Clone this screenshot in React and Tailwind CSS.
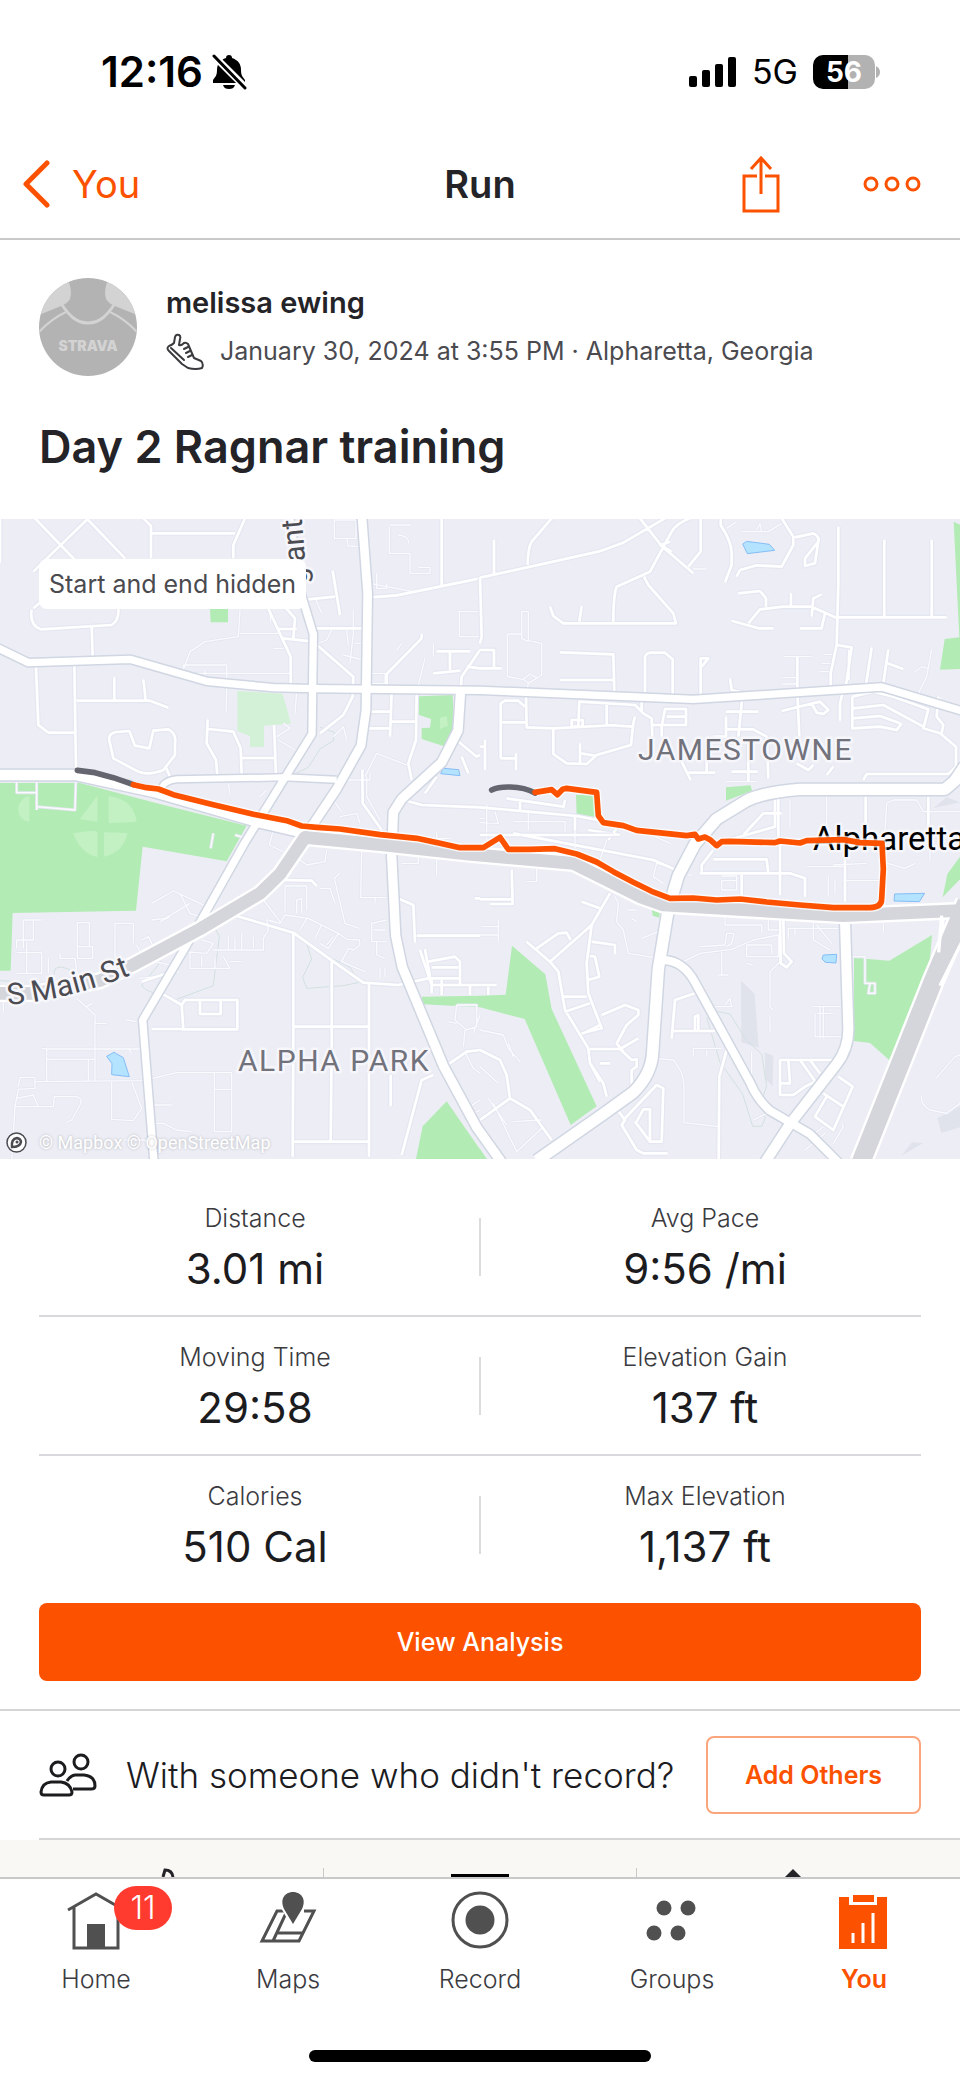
import clsx from "clsx";

const stats = [
  [
    { label: "Distance", value: "3.01 mi" },
    { label: "Avg Pace", value: "9:56 /mi" },
  ],
  [
    { label: "Moving Time", value: "29:58" },
    { label: "Elevation Gain", value: "137 ft" },
  ],
  [
    { label: "Calories", value: "510 Cal" },
    { label: "Max Elevation", value: "1,137 ft" },
  ],
];

// Map geometry is stored at 3x and scaled down when drawn.
const arterials = [
  { w: 22, d: "M-10 385L85 431L390 421L620 487L820 506L940 509L1440 514L2080 541L2645 504L2890 577" },
  { w: 22, d: "M868 -10L905 230L940 345L936 645L840 800L735 970L600 1210L428 1503L462 1930" },
  { w: 26, d: "M1086 -5L1103 223L1098 573L1083 680L1010 810L930 930" },
  { w: 28, d: "M1382 513L1374 635L1325 730L1205 840L1180 880L1175 1010L1187 1250L1207 1345L1330 1640L1430 1825L1505 1930" },
  { w: 32, d: "M-10 768L230 768L460 818L780 910L930 945" },
  { w: 18, d: "M485 805Q495 785 530 781L850 775L1010 782" },
  { w: 34, d: "M2895 740L2865 785L2835 811L2400 811Q2290 820 2240 845L2150 900L2085 975L2035 1070L2005 1170L1975 1350L1958 1600Q1955 1665 1900 1720L1810 1785L1610 1925" },
  { w: 24, d: "M1990 1323Q2050 1325 2085 1390L2250 1690Q2270 1740 2310 1775L2430 1845L2515 1930" },
  { w: 30, d: "M2535 1205L2545 1530Q2545 1590 2510 1635L2370 1815L2295 1930" },
];

const highways = [
  { w: 38, d: "M-10 1423L110 1423L300 1385L400 1337L600 1230L780 1123L840 1065L915 955L1150 978L1400 1005L1720 1033L1920 1133L1990 1158L2530 1190L2890 1174" },
  { w: 56, d: "M2900 1150L2800 1385L2583 1930" },
];

const parks = [
  "M0 792H240L480 855L740 920L680 1027L428 983L408 1175L38 1182L32 1355H0Z",
  "M1257 532L1358 528L1362 620L1332 682L1265 660V627L1290 626L1293 600L1257 588Z",
  "M630 270H684V310H632Z",
  "M2861 8L2890 22V450L2820 452L2834 360L2878 355Z",
  "M1728 827H1785L1786 896L1730 890Z",
  "M2178 805L2252 799L2256 815L2178 845Z",
  "M1264 1433L1440 1430L1517 1427L1536 1280L1636 1366L1655 1470L1790 1762L1712 1818L1574 1500L1440 1465L1270 1456Z",
  "M1340 1747L1268 1822L1248 1920H1460Z",
  "M2562 1316L2668 1325L2796 1248L2786 1370L2672 1627L2610 1572L2562 1566Z",
  "M2890 1000L2842 1065L2828 1135L2890 1070Z",
  "M1955 1168L1980 1174L1978 1196L1958 1190Z",
  "M1440 1890L1460 1920H1440Z",
];

const palePatches = [
  "M240 900L292 830V908Z",
  "M326 832Q400 840 410 908L326 912Z",
  "M220 943Q290 930 292 940V1015Q240 1000 220 943Z",
  "M312 940L382 943Q370 1000 312 1013Z",
  "M88 830V908Q50 900 56 860Q64 836 88 830Z",
  "M1320 596L1340 592L1344 620L1320 630Z",
];

const ponds = [
  "M2228 75L2240 67L2308 76L2324 94L2242 104Z",
  "M1330 748L1376 752L1380 770L1322 764Z",
  "M2684 1125L2774 1123L2758 1148L2682 1146Z",
  "M2470 1308L2510 1306L2508 1332L2476 1330L2466 1320Z",
  "M320 1612L342 1600L370 1616L388 1673L335 1667L336 1634Z",
];

const shadows = [
  "M2223 1385L2264 1424L2276 1586L2224 1570Z",
  "M2294 1600L2320 1610L2318 1702L2296 1680Z",
  "M2812 1798L2880 1762V1825L2824 1842Z",
  "M2736 1870L2770 1872L2704 1910Z",
  "M2800 868L2840 834L2880 850Z",
];

// Side streets, one group per map tile.
const tiles = [
  {
    x: 0,
    y: -27,
    streets:
      "M105 25L225 150M260 25L375 145M265 25L100 185M430 25L453 48V145M455 70H705M735 25L700 105V145M0 25V160M95 300Q88 345 122 358L335 345Q358 330 355 295M100 295L130 270M275 350L278 440M108 470L115 645L145 668H225M223 465L228 775M230 572H450L505 593M343 502V572M430 508L437 570M330 700Q320 670 350 666L388 663L405 707L448 715L460 662L505 658Q530 670 525 700V735L490 780Q440 800 405 780L340 745ZM497 770L510 800M623 628L620 700L648 750L652 795M625 657L700 665L722 715L725 795M725 744H825M822 645L828 795M925 268L1005 260M998 182L1020 315M1110 262L1190 256L1440 205M1325 25V225M945 355H1095M850 385L940 395L1060 500L1058 560L1030 615L960 670M800 285L872 440V520M850 285L885 325L880 385M836 357H890M1265 372L1265 385L1160 492V530M1310 424H1410M1350 424V480M1300 490L1380 482M1440 420L1385 500L1382 540M1400 470L1440 475M1105 605H1175M1175 545L1170 680M1175 635H1250M1105 655H1170M1250 555L1248 690L1225 760L1235 810M1087 780L1088 880L1145 960M1210 870L1265 885L1440 892M1370 690L1430 740L1440 735M1310 800L1275 850M1385 740L1405 790",
    paths:
      "M50 815V848H108M110 815V900M110 890L225 900L228 800M1003 30H1068V85H1003ZM1040 85L1045 108L1080 110M1168 50V130H1230V190M1232 45H1170M1195 75Q1230 80 1225 100M1230 190H1290V172H1255M1375 305H1440M1378 305V380H1440M550 480L570 425L615 395L715 380L720 300M720 370H840M680 465H550V490H870M680 465V540L678 608M615 480V495M810 300L812 335M890 545L885 610M1110 220L1240 245M1130 190V235H1160V220M1060 300V370L1050 460M1040 360L1045 405M1065 400H1090V370M1030 435L1090 450M995 360L980 390L955 400M1115 490H1155V520H1110M1205 400L1190 420M1300 400V440M1275 445L1255 525M830 680L870 655L850 640M835 690L885 720M1095 800L1130 730L1220 765M1100 800V860L1140 930M985 850L1025 905M780 860L800 840M685 820L690 850M1000 680L1030 650L1040 690M820 415H850M948 270L965 310M1040 810H1110V785M1020 920L1070 910L1080 940M1310 965V985H1350",
  },
  {
    x: 1440,
    y: -27,
    streets:
      "M42 90V190M215 25L155 95Q143 115 143 165M0 203L355 125L430 98L555 25M480 25L545 108L640 190M630 25Q590 40 575 65L510 185L410 230Q400 255 400 335M662 25V125L625 170M575 125L540 105L570 95M492 200L505 225L580 310L588 340H250L220 318L210 290M305 288L298 335M722 25V45Q755 95 755 130V165L735 217M905 25L940 80V105L905 170L830 166L780 180L770 200M945 82L1000 70Q1020 80 1015 95L1005 160L975 168V145L1015 95M775 250L840 243L858 265V290M755 332L835 355H880M805 340L840 298L910 290H995L1065 322H1400M933 250V288M995 320L1000 265L1025 253M1035 310L1025 355H960M1075 50V220L1070 405L1115 412L1098 525M1213 90V320M1355 90V320M1070 405L1052 490V555M1108 420L1105 510M1175 412L1158 525M1225 418L1210 520M1222 460L1270 477M240 427L400 433L403 545M240 510H400M495 550V440Q500 428 515 428H555L578 448V555M662 555V445H685L665 470M750 505L755 540L788 548L775 680M952 440V545L958 680M0 420H42V475M0 475H65M0 203L5 380L0 400M138 555L140 652L220 655L410 645M62 745V580L75 572H115L135 590M62 637H140M62 745H108M108 730V780M220 655V732L260 760L320 762L350 735L453 705L460 640L465 620M295 648L298 575L465 585L490 610L515 625L517 680M380 583V645L460 650M275 630H308V650H275ZM300 700V762M303 730L350 738M485 570V605M517 645H618V597H555L545 650V680M560 620H615M738 605H835M738 620V680H700M740 658H820L860 680L865 805M605 755L632 810M625 788H705M680 700V785M755 785H833M805 700V815M905 603L1020 575L1045 600L1030 612L1010 608L995 580M1090 540L1080 580V632M1117 560V655L1200 650L1250 660L1265 640M1120 595L1210 585L1330 650M1117 625L1200 618L1260 640M1117 560L1180 545L1240 560L1345 598L1330 655L1380 670L1428 710V770L1405 792H1160L1150 810M1375 560L1370 620L1390 645L1385 670M0 710H18M15 690V780M80 865L250 890M255 870L250 895M120 870V905M0 892L290 918L640 985M285 920V990M1157 860V960M1345 860V950M885 860V950L745 990M950 760L985 780L1000 765M1060 770L1040 795M895 860V980M850 910H905M850 910L790 975M325 960L420 975M410 955L385 990",
    paths:
      "M82 372H125V305H145V392L185 400V495L145 520L130 508L150 492L170 503M82 372V500L130 508M145 520L140 545M125 372V385L145 395M908 503H950M908 522H950M910 440H995M1030 433H1055M1025 460H1050M1020 485H1048M1355 418L1340 500L1315 550M1305 485L1325 470L1345 475M785 65H865L905 40M830 60L840 40L845 65M640 177H678M740 55L770 35M1215 960L1220 880L1240 870H1310L1330 905H1440M930 870V950M1040 860V960M20 885V990M145 900V960M45 905L55 940L0 938M15 925H0M100 935H255V980M160 990V970H178V990M1165 968V990M1385 560L1370 600M738 815H830",
  },
  {
    x: 0,
    y: 933,
    streets:
      "M0 470L95 468L320 430M845 150L935 152L950 168M710 258L880 308L1000 395L1090 458L1195 465L1285 445M880 308V635L878 980M995 395V635L992 935M1107 460V980M880 590H1105M878 935H1105M485 490L545 525L550 597H455M545 525L555 510H712V598H545M600 510V552H662V510M425 455L500 430M1190 203L1240 225L1245 338M1250 317H1440M1440 205H1425M1260 360L1295 465M1275 358L1290 440M1285 395L1365 380L1380 395V462M1290 445H1380M1295 412H1375M1295 450V490M1325 450V495M1295 465H1440M1410 465V495M1172 735V828M1300 735L1265 750L1205 975M1335 710L1400 665L1440 660",
    paths:
      "M640 10L632 55M705 15L730 22M70 355V270H125M100 268V330H50V355M80 335V430M125 368V430H50M50 368H125M232 278H268V350M232 278V385H278V350H232M345 385V280H400V340M455 220L520 183L590 215L640 240M455 270L495 265L570 220M540 190L570 250L600 260M480 275L510 260M425 330L445 320L460 350M410 345L430 385M145 385V430M180 370V385H225L230 425M420 445L470 440M800 265L805 300L790 325V360H640M725 310V358M705 322V358M685 318V358M760 320V355M820 0L808 45L870 75M900 90L920 105L975 95L980 60M855 245V168H920V240M890 250V210L905 205V250M960 175H990L1005 220M1020 130L1003 145L1035 280L1078 295M1085 60L1082 203H1160M1125 203V220M805 270L840 280L855 255L925 265L1015 310L1040 328L1078 330L1080 345L1060 360L1045 355L1025 395L1095 425M920 265L900 300M965 285L945 325M1015 310L985 355L960 340M1000 320L980 345M1115 280L1160 270M1115 280V335H1160M1120 300H1155M1130 335V375L1155 385M1140 412V445M1155 412V440M1310 85V135M1205 100H1255V65M790 210L840 275M570 368V415H690M605 380V410M645 385V415M670 380L690 415M690 395H725M465 395L530 410L535 430M550 365L620 370L640 340L605 330M230 505L285 555V755M260 530L275 520M285 580H320M125 655L140 657H425M140 657V755M140 688H285M265 688V755M105 755L430 752M55 770L60 742H105V775L55 778L45 830M45 830L35 990M50 805L100 795L115 830M45 830H160L163 800H230Q250 805 240 825L215 870L200 877M335 755V868L400 872L425 835L395 755M430 752L530 728H695V905H643V728M643 778H695M460 825H515M460 880H490L530 900L575 905M375 930H430L460 940M10 545V515H30M1345 575L1370 580M1370 525H1430V590L1400 600L1365 570L1370 525M1395 600L1390 650M1440 555L1420 610M1395 665L1420 715L1440 730M1410 830L1440 810M1420 850L1440 840M380 570L410 575M385 655L395 670",
  },
  {
    x: 1440,
    y: 933,
    streets:
      "M95 120L98 222H30M0 208H95M390 190L335 285L320 400L325 490L365 595L305 610M335 285L210 395M140 335L210 395L235 425L255 540L325 655L330 700L360 755M170 355L235 310L260 308L272 330M305 215L360 235M245 500H320M255 545L330 520M365 555L435 525L475 540V555L440 585L410 640L430 665M310 610L360 585M330 657H420L475 625M420 657L455 690L470 688V710L455 720V765M330 700L370 760L380 800M360 700H390M335 335L405 345V372M330 378L345 380L358 440L325 450M405 830L435 870L425 885L470 960L490 970H563M430 870L530 765L550 775L545 935H510L465 875M510 935V838H490L470 875M215 930L150 840L90 805L0 870M90 805L80 735L60 690L0 660M0 465H50M25 470V495M575 625L585 510L645 490M575 603H705M645 600V560L655 555V600M740 660L718 740L716 990M660 130H930L975 145V200M865 130L860 88H700M700 60L665 105V125M785 135V195M900 40V195M1095 80V215M910 260L912 370L935 395L920 412L902 400L900 260M900 690H1060M900 690V795H940L975 770L1005 755M1060 690H960L1010 760M925 690L930 760H900M990 690L1020 730M1075 740L1118 770L1060 900L1005 860L1040 800M1030 790L1090 830M1380 270L1390 270L1385 350L1360 440M0 15H400M100 10L520 90L600 125",
    paths:
      "M1155 380V460H1185V490H1165L1170 460M0 600L70 615L85 655L120 695M85 640L100 680M0 710L55 760M285 0V55M380 30L360 90M570 110L530 100L520 140L550 160M525 20L570 40M635 135H625M1060 105L1160 100M1205 95L1275 115L1305 100M1350 90V60M980 110H1090M1090 152H1205M1045 140V200M1065 150V190M725 138H770V180H725V152H770M925 325V295H1090M1000 270V330L1050 360M945 295V315M1010 285L1055 340M1210 280V305M405 200L415 220L410 275L430 300L445 370L520 382M445 240H470M485 325L535 305M455 265L470 275M610 395L660 370L755 358L820 330L895 315V380H800V345H875V370M660 350L735 345L740 310H762L755 340L740 350M735 265V285H845V310M865 265V300H895M900 395L870 425V530L880 540M725 360V435M715 435H745M800 400L818 405M735 525L750 505L755 530L700 530M530 685L580 690L600 720Q612 740 612 780V878L715 890M640 680V655H725M680 660V680M1000 530H1085M1010 550H1060M1005 550V620H1085M1020 530V625M1030 530V625M860 850L820 870M990 920L1030 890M975 960L1035 910M1060 940L1090 890L1085 880M1325 795Q1320 825 1350 840L1400 850L1440 820M1368 745L1425 680L1440 675M815 665V750M870 560V610M1115 380H1155M5 290H55M55 270V335M0 315H55M25 805L80 885M40 820L110 965M100 875L185 870M190 890L110 965M170 115V155H140",
  },
];

const trails =
  "M648 1233L658 1253L640 1400L525 1443M155 1400L165 1350Q180 1335 220 1358M485 1325L425 1400Q440 1420 475 1423M920 1275L935 1320L908 1375L920 1408L1030 1400L1080 1390L1050 1345L1000 1320M960 625L1003 640L1000 665L960 690L925 745L885 765M2140 1475L2190 1485L2240 1565L2285 1605L2300 1700L2290 1730L2295 1800L2285 1822H2258L2228 1725L2160 1630L2120 1495M0 1385L60 1388";

const route =
  "M400 797L440 806L475 810L520 827L640 857L760 886L860 905L905 921L950 925L1020 930L1140 947L1250 958L1320 973L1380 986H1450L1500 955L1525 991H1590L1665 989L1730 1005L1790 1029L1840 1058L1900 1090L1955 1117L2010 1138L2080 1137L2150 1143L2220 1140L2300 1149L2400 1158L2500 1166L2610 1166Q2645 1165 2645 1140L2650 1050L2646 973L2580 971L2530 962L2420 965L2400 972L2340 966L2325 971L2190 967L2165 968L2150 980L2130 962L2115 954L2095 960L2085 946L2060 950L1910 934L1870 920L1810 911L1795 890L1790 820L1700 808L1688 811L1672 827L1655 812L1605 820";

function Chevron() {
  return (
    <svg viewBox="0 0 28 48" className="h-12 w-7" fill="none" stroke="currentColor" strokeWidth="5" strokeLinecap="round" strokeLinejoin="round">
      <path d="M25 3L4 24L25 45" />
    </svg>
  );
}

function ShareIcon() {
  return (
    <svg viewBox="0 0 40 60" className="h-15 w-10" fill="none" stroke="currentColor" strokeWidth="3">
      <path d="M16 22H3V57H37V22H24M20 40V4M10 15L20 4L30 15" />
    </svg>
  );
}

function BellOff() {
  return (
    <svg viewBox="0 0 36 36" className="h-9 w-9">
      <path fill="#000" d="M18 1C20 1 21 2 21 4C27 6 30 10 30 16C30 22 32 23 34 26V29H2V26C4 23 6 22 6 16C6 10 9 6 15 4C15 2 16 1 18 1ZM12 31H24C23 34 21 35 18 35S13 34 12 31Z" />
      <path stroke="#fff" strokeWidth="7" d="M2 1L35 34" />
      <path stroke="#000" strokeWidth="3" strokeLinecap="round" d="M3 2L34 34" />
    </svg>
  );
}

function StatusBar() {
  return (
    <div className="flex h-32 items-center justify-between pt-4 pr-20 pl-[101px] text-black">
      <div className="flex items-center gap-2">
        <span className="text-[42px] leading-12 font-semibold">12:16</span>
        <BellOff />
      </div>
      <div className="flex items-center gap-[15px]">
        <svg viewBox="0 0 48 30" className="h-[30px] w-12">
          <rect x="0" y="19" width="8" height="11" rx="2" />
          <rect x="13" y="13" width="8" height="17" rx="2" />
          <rect x="26" y="7" width="8" height="23" rx="2" />
          <rect x="39" y="0" width="8" height="30" rx="2" />
        </svg>
        <span className="text-[34px] leading-12">5G</span>
        <div className="flex items-center gap-px">
          <div className="flex h-[34px] w-[62px] items-center justify-center rounded-[10px] bg-linear-to-r from-black from-56% to-[#b2b2b2] to-56% text-[28px] leading-8 font-bold text-white">
            56
          </div>
          <svg viewBox="0 0 4 12" className="h-3 w-1">
            <path fill="#b2b2b2" d="M0 0Q4 2 4 6T0 12Z" />
          </svg>
        </div>
      </div>
    </div>
  );
}

function Header() {
  return (
    <header className="grid h-28 grid-cols-3 items-center border-b-2 border-[#c9c9c9] pt-0.5 pr-[39px] pl-[22px] text-[#fc5200]">
      <button className="flex items-center gap-[22px] justify-self-start text-[38px] leading-12">
        <Chevron />
        You
      </button>
      <h1 className="justify-self-center pl-[17px] text-[38px] leading-12 font-semibold text-[#242428]">Run</h1>
      <div className="flex items-center gap-[82px] justify-self-end">
        <button aria-label="Share">
          <ShareIcon />
        </button>
        <button aria-label="More">
          <svg viewBox="0 0 58 16" className="h-4 w-[58px]" fill="none" stroke="currentColor" strokeWidth="3">
            <circle cx="8" cy="8" r="6" />
            <circle cx="29" cy="8" r="6" />
            <circle cx="50" cy="8" r="6" />
          </svg>
        </button>
      </div>
    </header>
  );
}

function Avatar() {
  return (
    <svg viewBox="0 0 98 98" className="size-[98px] shrink-0 rounded-full">
      <rect width="98" height="98" fill="#b3b3b3" />
      <path fill="#d3d3d3" d="M0 0H28Q34 12 31 21Q28 26 22 28L0 37ZM98 0H70Q64 12 67 21Q70 26 76 28L98 37Z" />
      <path fill="none" stroke="#d3d3d3" strokeWidth="3" d="M23 27C30 37 37 45 49 45S68 37 75 27" />
      <path fill="none" stroke="#d3d3d3" strokeWidth="2" d="M27 34Q12 41 0 54M71 34Q86 41 98 54" />
      <text x="49" y="73" textAnchor="middle" fill="#d3d3d3" className="text-[14px] font-black">
        STRAVA
      </text>
    </svg>
  );
}

function Shoe() {
  return (
    <svg viewBox="0 0 38 38" className="size-[38px] shrink-0" fill="none" stroke="#3b3b3f" strokeWidth="2" strokeLinecap="round" strokeLinejoin="round">
      <path d="M8 11L9 5Q10 2 13 3Q15 4 14 7L13 13Q15 14 18 11Q20 10 22 12L28 26L35 29Q38 32 36 36Q30 38 22 36L16 32L3 19Q0 16 3 14Q6 13 8 11Z" />
      <path d="M5 16L18 28M22 15L18 17M24 19L20 21M26 23L22 25" />
    </svg>
  );
}

function RouteMap() {
  return (
    <div className="relative overflow-hidden">
      <svg viewBox="0 0 960 640" className="block w-full bg-[#edeef5]">
        <g transform="scale(0.33333)" fill="none" strokeLinejoin="round">
          {shadows.map((d) => (
            <path key={d} d={d} fill="#e0e3ec" />
          ))}
          <path fill="#d3f1d6" d="M712 516L848 524L873 614L792 620V684H750V652L712 636Z" />
          {parks.map((d) => (
            <path key={d} d={d} fill="#b3ebb5" />
          ))}
          {palePatches.map((d) => (
            <path key={d} d={d} fill="#c3f1c4" />
          ))}
          <path d={trails} stroke="#d2e0df" strokeWidth="3" />
          {tiles.map((t) => (
            <g key={`${t.x}/${t.y}`} transform={`translate(${t.x} ${t.y})`}>
              <path d={t.paths} stroke="#e5e7f1" strokeWidth="9" />
              <path d={t.streets} stroke="#e4e6f1" strokeWidth="15" />
              <path d={t.paths} stroke="#fafaff" strokeWidth="4" />
              <path d={t.streets} stroke="#fff" strokeWidth="8" />
            </g>
          ))}
          {ponds.map((d) => (
            <path key={d} d={d} fill="#b3e3ff" stroke="#86bdf5" strokeWidth="3" />
          ))}
          {arterials.map((r) => (
            <path key={r.d} d={r.d} stroke="#d0d6e2" strokeWidth={r.w + 9} />
          ))}
          {arterials.map((r) => (
            <path key={r.d} d={r.d} stroke="#fff" strokeWidth={r.w} />
          ))}
          {highways.map((r) => (
            <path key={r.d} d={r.d} stroke="#fff" strokeWidth={r.w + 14} />
          ))}
          {highways.map((r) => (
            <path key={r.d} d={r.d} stroke="#d5d6dc" strokeWidth={r.w} />
          ))}
          <path d="M2825 1190L2816 1300M2880 1280L2820 1400" stroke="#fff" strokeWidth="10" />
        </g>
        <g className="font-[Roboto]" stroke="#f6f6fb" strokeWidth="5" strokeLinejoin="round" paintOrder="stroke">
          <text x="638" y="241" fill="#71727c" className="text-[30px] tracking-wider">
            JAMESTOWNE
          </text>
          <text x="238" y="552" fill="#71727c" className="text-[30px] tracking-wider">
            ALPHA PARK
          </text>
          <path id="main-st" d="M8 486Q75 480 145 450" fill="none" stroke="none" />
          <text fill="#4b4b52" className="text-[30px]">
            <textPath href="#main-st">S Main St</textPath>
          </text>
          <text transform="translate(306 50) rotate(-95)" fill="#4b4b52" className="text-[30px]">
            <tspan x="-15">g</tspan>
            <tspan x="8">ant</tspan>
          </text>
          <text x="813" y="331" fill="#000" className="text-[33px]">
            Alpharetta
          </text>
        </g>
        <g transform="scale(0.33333)" fill="none" strokeLinecap="round" strokeLinejoin="round">
          <path d={route} stroke="#fff" strokeOpacity="0.7" strokeWidth="26" />
          <path d="M232 754L285 761L340 776L400 797M1475 813Q1495 803 1530 804Q1575 805 1605 822" stroke="#64656f" strokeWidth="17" />
          <path d={route} stroke="#fc5200" strokeWidth="17" />
        </g>
      </svg>
      <div className="absolute top-10 left-[39px] rounded-lg bg-white px-2.5 py-2 text-[25px] leading-[34px] text-[#4a4a4f]">
        Start and end hidden
      </div>
      <div className="absolute bottom-1.5 left-1.5 flex items-center gap-3 font-[Roboto] text-[18px] leading-5 text-white text-shadow-[0_0_3px_rgb(0_0_0/0.25)]">
        <svg viewBox="0 0 21 21" className="size-[21px]">
          <circle cx="10.500" cy="10.500" r="9.500" fill="#fff" stroke="#4b4b52" strokeWidth="1.500" />
          <path fill="none" stroke="#4b4b52" strokeWidth="2.500" d="M6 15Q5 7 11 6Q15 7 15 10Q14 15 6 15Z" />
          <circle cx="11" cy="10" r="1.500" fill="#4b4b52" />
        </svg>
        © Mapbox © OpenStreetMap
      </div>
    </div>
  );
}

function Stat({ label, value }) {
  return (
    <div className="flex flex-1 flex-col items-center gap-[11px]">
      <dt className="text-[25px] leading-8 font-light text-[#3b3b3f]">{label}</dt>
      <dd className="text-[42px] leading-12 text-[#1c1c1f]">{value}</dd>
    </div>
  );
}

function Stats() {
  return (
    <dl className="px-[39px] pt-[19px]">
      {stats.map(([left, right], i) => (
        <div
          key={left.label}
          className={clsx("flex h-[139px] items-start gap-2 pt-6", i < stats.length - 1 && "border-b-2 border-[#d8d8dd]")}
        >
          <Stat {...left} />
          <div className="mt-4 h-[58px] w-0.5 bg-[#dcdcdf]" />
          <Stat {...right} />
        </div>
      ))}
    </dl>
  );
}

function PeopleIcon() {
  return (
    <svg viewBox="0 0 58 44" className="h-11 w-[58px] shrink-0" fill="none" stroke="#1c1c1f" strokeWidth="3" strokeLinejoin="round">
      <circle cx="42" cy="9" r="7" />
      <circle cx="19" cy="16" r="7" />
      <path d="M28 28Q32 22 36 22H45Q56 23 56 33Q56 36 52 36H34" />
      <path d="M12 29H22Q31 30 33 39Q33 42 30 42H5Q2 42 2 39Q3 30 12 29Z" />
    </svg>
  );
}

function HomeIcon() {
  return (
    <svg viewBox="0 0 60 60" className="size-15" fill="none" stroke="currentColor" strokeWidth="3">
      <path d="M2 20L30 4L58 20M8 17V58H52V17" />
      <path fill="currentColor" stroke="none" d="M21 34H39V58H21Z" />
    </svg>
  );
}

function MapsIcon() {
  return (
    <svg viewBox="0 0 60 60" className="size-15" fill="none" stroke="currentColor" strokeWidth="3">
      <path d="M26 21H19L4 51H41L56 21H46M15 51L29 21M20 43H44" />
      <path stroke="#fff" strokeWidth="5" fill="#fff" d="M35 34L26 18V10H44V18Z" />
      <path stroke="none" fill="currentColor" d="M35 34L26 19C21 8 28 2 35 2S49 8 44 19Z" />
    </svg>
  );
}

function RecordIcon() {
  return (
    <svg viewBox="0 0 60 60" className="size-15">
      <circle cx="30" cy="30" r="27" fill="none" stroke="currentColor" strokeWidth="3" />
      <circle cx="30" cy="30" r="14.500" fill="currentColor" />
    </svg>
  );
}

function GroupsIcon() {
  return (
    <svg viewBox="0 0 60 60" className="size-15" fill="currentColor">
      <circle cx="22" cy="18" r="7.500" />
      <circle cx="46" cy="18" r="7.500" />
      <circle cx="12" cy="43" r="7.500" />
      <circle cx="36" cy="43" r="7.500" />
    </svg>
  );
}

function YouIcon() {
  return (
    <svg viewBox="0 0 60 60" className="size-15">
      <path fill="currentColor" d="M5 7H15V15H43V7H53V59H5ZM19 5H40V12H19Z" />
      <path stroke="#fff" strokeWidth="3" d="M19 53V43M29 53V33M39 53V23" />
    </svg>
  );
}

const tabs = [
  { name: "Home", icon: HomeIcon, badge: 11 },
  { name: "Maps", icon: MapsIcon },
  { name: "Record", icon: RecordIcon },
  { name: "Groups", icon: GroupsIcon },
  { name: "You", icon: YouIcon, active: true },
];

function TabBar() {
  return (
    <footer className="border-t-2 border-[#c9c9c9] bg-white">
      <nav className="grid grid-cols-5 pt-[11px]">
        {tabs.map(({ name, icon: Icon, badge, active }) => (
          <a
            key={name}
            href="#"
            className={clsx(
              "flex flex-col items-center gap-[13px] text-[25px] leading-8",
              active ? "font-semibold text-[#fc5200]" : "font-light text-[#3b3b3f]"
            )}
          >
            <span className={clsx("relative", !active && "text-[#505050]")}>
              <Icon />
              {badge && (
                <span className="absolute -top-1 left-12 flex h-11 w-[58px] items-center justify-center rounded-full bg-[#ff3b30] text-[32px] leading-10 text-white">
                  {badge}
                </span>
              )}
            </span>
            {name}
          </a>
        ))}
      </nav>
      <div className="mx-auto mt-[55px] mb-5 h-3 w-[342px] rounded-full bg-black" />
    </footer>
  );
}

export default function App() {
  return (
    <div className="min-h-screen bg-white font-[Inter,sans-serif] text-[#242428]">
      <StatusBar />
      <Header />
      <main>
        <section className="px-[39px] pt-[38px]">
          <div className="flex items-center gap-[29px]">
            <Avatar />
            <div className="flex flex-col gap-2">
              <p className="text-[29px] leading-10 font-semibold">melissa ewing</p>
              <p className="flex items-center gap-4 text-[25px] leading-10 text-[#4a4a4f]">
                <Shoe />
                January 30, 2024 at 3:55 PM · Alpharetta, Georgia
              </p>
            </div>
          </div>
          <h2 className="mt-[38px] mb-[39px] text-[45px] leading-[66px] font-semibold">Day 2 Ragnar training</h2>
        </section>
        <RouteMap />
        <Stats />
        <div className="border-b-2 border-[#d5d5d5] px-[39px] pt-2 pb-7">
          <button className="h-[78px] w-full rounded-lg bg-[#fc5200] text-[25px] leading-8 font-medium text-white">
            View Analysis
          </button>
        </div>
        <div className="ml-[39px] flex items-center border-b-2 border-[#d5d5d5] pt-[25px] pr-[39px] pb-6">
          <PeopleIcon />
          <p className="ml-[29px] flex-1 text-[35px] leading-10 font-light text-[#1c1c1f]">
            With someone who didn't record?
          </p>
          <button className="h-[78px] w-[215px] rounded-lg border-2 border-[#fba57c] text-[25px] leading-8 font-semibold text-[#fc5200]">
            Add Others
          </button>
        </div>
        <div className="grid grid-cols-3 items-end bg-[#f9f8f4] px-2.5 pt-7">
          <svg viewBox="0 0 16 9" className="h-[9px] w-4 justify-self-center" fill="none" stroke="#242428" strokeWidth="3">
            <path d="M4 9L6 2Q13 2 14 9" />
          </svg>
          <div className="flex h-[9px] items-end justify-center border-x border-[#c9c9c9]">
            <div className="h-[3px] w-[58px] bg-black" />
          </div>
          <svg viewBox="0 0 16 9" className="h-[9px] w-4 justify-self-center" fill="#242428">
            <path d="M8 1L16 9H0Z" />
          </svg>
        </div>
      </main>
      <TabBar />
    </div>
  );
}
